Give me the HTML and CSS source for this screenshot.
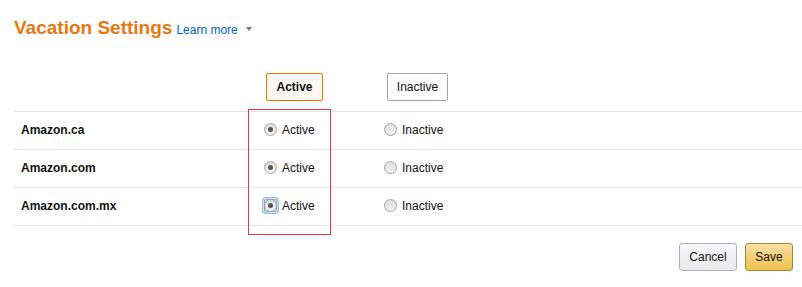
FILE: index.html
```html
<!DOCTYPE html>
<html lang="en">
<head>
    <meta charset="UTF-8">
    <meta name="viewport" content="width=device-width, initial-scale=1.0">
    <title>Vacation Settings</title>
    <link rel="stylesheet" href="styles.css">
</head>
<body>
    <div class="page">
        <div class="title-bar">
            <h1>Vacation Settings</h1>
            <a href="#" class="learn-more">Learn more</a>
            <span class="caret"></span>
        </div>

        <div class="settings">
            <div class="row head">
                <div class="cell"></div>
                <div class="cell col-active"><button class="toggle selected">Active</button></div>
                <div class="cell col-inactive"><button class="toggle">Inactive</button></div>
            </div>

            <div class="rows">
                <div class="row">
                    <div class="cell name">Amazon.ca</div>
                    <div class="cell col-active"><span class="radio checked"></span>Active</div>
                    <div class="cell col-inactive"><span class="radio"></span>Inactive</div>
                </div>
                <div class="row">
                    <div class="cell name">Amazon.com</div>
                    <div class="cell col-active"><span class="radio checked"></span>Active</div>
                    <div class="cell col-inactive"><span class="radio"></span>Inactive</div>
                </div>
                <div class="row">
                    <div class="cell name">Amazon.com.mx</div>
                    <div class="cell col-active"><span class="radio checked focused"></span>Active</div>
                    <div class="cell col-inactive"><span class="radio"></span>Inactive</div>
                </div>
            </div>

            <!-- highlight round the Active column -->
            <div class="highlight"></div>
        </div>

        <div class="actions">
            <button class="btn cancel">Cancel</button>
            <button class="btn primary">Save</button>
        </div>
    </div>
</body>
</html>
```

FILE: styles.css
```css
* {
    box-sizing: border-box;
    margin: 0;
    padding: 0;
}

body {
    font-family: 'Liberation Sans', Arial, sans-serif;
    font-size: 12px;
    color: #111;
    background-color: white;
}

.page {
    padding-left: 14px;
}

.title-bar {
    display: flex;
    align-items: baseline;
    padding-top: 17px;
}

h1 {
    font-size: 19px;
    line-height: 22px;
    font-weight: bold;
    color: #e47911;
}

.learn-more {
    margin-left: 4px;
    font-size: 12px;
    color: #0066c0;
    text-decoration: none;
}

.caret {
    display: inline-block;
    margin-left: 8px;
    border-left: 3px solid transparent;
    border-right: 3px solid transparent;
    border-top: 4px solid #777;
    position: relative;
    top: -3px;
}

.settings {
    position: relative;
    margin-top: 34px;
}

.row {
    display: grid;
    grid-template-columns: 234px 82px 1fr;
    height: 38px;
    padding-bottom: 2px;
    border-top: 1px solid #e7e7e7;
    align-items: center;
}

.row.head {
    border-top: none;
    height: 38px;
    padding-bottom: 0;
    align-items: start;
}

.rows {
    border-bottom: 1px solid #e7e7e7;
}

.cell {
    display: flex;
    align-items: center;
}

.name {
    padding-left: 7px;
    font-weight: bold;
}

.col-active {
    padding-left: 16px;
}

.col-inactive {
    padding-left: 54px;
}

.head .col-active {
    padding-left: 18px;
}

.head .col-inactive {
    padding-left: 57px;
}

.toggle {
    font-family: inherit;
    font-size: 12px;
    color: #111;
    width: 61px;
    height: 28px;
    background-color: white;
    border: 1px solid #a6a6a6;
    border-radius: 2px;
}

.toggle.selected {
    width: 57px;
    font-weight: bold;
    border-color: #e77600;
    background-color: #fdf8f1;
}

.radio {
    display: inline-block;
    width: 13px;
    height: 13px;
    margin-right: 5px;
    border: 1px solid #a3a3a3;
    border-radius: 50%;
    background: linear-gradient(#dedede, #f2f2f2);
    position: relative;
}

.radio.checked::after {
    content: '';
    position: absolute;
    left: 3px;
    top: 3px;
    width: 5px;
    height: 5px;
    border-radius: 50%;
    background-color: #555;
}

.radio.focused {
    box-shadow: 0 0 0 1px #cfe3fb, 0 0 0 2px #8dbaf0;
    border-radius: 2px;
}

.radio.focused::before {
    content: '';
    position: absolute;
    inset: -1px;
    border: 1px solid #a3a3a3;
    border-radius: 50%;
}

.highlight {
    position: absolute;
    left: 234px;
    top: 36px;
    width: 83px;
    height: 126px;
    border: 1px solid #e8343a;
    pointer-events: none;
}

.actions {
    display: flex;
    justify-content: flex-end;
    gap: 8px;
    padding-right: 9px;
    margin-top: 17px;
}

.btn {
    font-family: inherit;
    font-size: 12px;
    color: #111;
    width: 48px;
    height: 28px;
    border: 1px solid #adb1b8;
    border-radius: 3px;
    background: linear-gradient(#f7f8fa, #e7e9ec);
}

.btn.cancel {
    width: 58px;
}

.btn.primary {
    border-color: #a88734;
    background: linear-gradient(#f7dfa5, #f0c14b);
}
```
